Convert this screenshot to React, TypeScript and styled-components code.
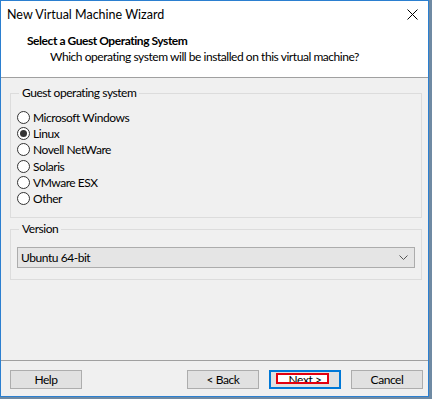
import { useState } from 'react';
import styled, { createGlobalStyle } from 'styled-components';

const GlobalStyle = createGlobalStyle`
  html, body {
    margin: 0;
    padding: 0;
    background: #6f8aa3;
  }
  body {
    font-family: Lato, "Noto Sans", sans-serif;
    font-size: 12px;
    letter-spacing: -0.45px;
    color: #000;
  }
`;

const Window = styled.div`
  box-sizing: border-box;
  width: 429px;
  height: 397px;
  border: 1px solid #2b7fd0;
  background: #f0f0f0;
  display: flex;
  flex-direction: column;
`;

const TitleBar = styled.div`
  height: 26px;
  display: flex;
  align-items: center;
  justify-content: space-between;
  padding: 0 9px 0 6px;
  background: #fff;
  font-size: 12.5px;
  letter-spacing: 0;
`;

const CloseButton = styled.button`
  width: 14px;
  height: 14px;
  padding: 0;
  border: none;
  background: none;
  display: flex;
  align-items: center;
  justify-content: center;
`;

const Header = styled.div`
  background: #fff;
  border-bottom: 1px solid #a0a0a0;
  padding: 6px 0 0 26px;
  box-sizing: border-box;
  height: 51px;
`;

const HeaderTitle = styled.div`
  font-weight: 700;
  line-height: 16px;
`;

const HeaderSubtitle = styled.div`
  padding-left: 23px;
  line-height: 16px;
`;

const Body = styled.div`
  flex: 1;
  padding: 7px 6px 0 9px;
  display: flex;
  flex-direction: column;
  gap: 3px;
`;

const Group = styled.fieldset<{ $height: number }>`
  margin: 0;
  min-inline-size: 0;
  height: ${(p) => p.$height}px;
  box-sizing: border-box;
  border: 1px solid #dcdcdc;
  padding: 8px 6px 0 6px;
`;

const Legend = styled.legend`
  padding: 0 3px;
  margin-left: 2px;
  line-height: 16px;
`;

const RadioList = styled.div`
  display: flex;
  flex-direction: column;
`;

const RadioRow = styled.label`
  height: 16.3px;
  display: flex;
  align-items: center;
  gap: 3px;
  cursor: default;
`;

const RadioCircle = styled.span<{ $checked: boolean }>`
  box-sizing: border-box;
  width: 13px;
  height: 13px;
  border: 1px solid #333;
  border-radius: 50%;
  background: #fff;
  display: flex;
  align-items: center;
  justify-content: center;

  &::after {
    content: '';
    width: 7px;
    height: 7px;
    border-radius: 50%;
    background: ${(p) => (p.$checked ? '#333' : 'transparent')};
  }
`;

const Select = styled.div`
  box-sizing: border-box;
  height: 21px;
  margin-top: 2px;
  border: 1px solid #acacac;
  background: #e5e5e5;
  display: flex;
  align-items: center;
  justify-content: space-between;
  padding: 0 6px 0 3px;
`;

const Footer = styled.div`
  border-top: 1px solid #a0a0a0;
  height: 36px;
  box-sizing: border-box;
  padding: 9px 5px 0 9px;
  display: flex;
  align-items: flex-start;
`;

const Spacer = styled.div`
  flex: 1;
`;

const NavButtons = styled.div`
  display: flex;
  gap: 10px;
`;

const Button = styled.button<{ $default?: boolean }>`
  position: relative;
  box-sizing: border-box;
  width: 72px;
  height: 19px;
  padding: 0;
  font-family: inherit;
  font-size: 12px;
  letter-spacing: inherit;
  line-height: 15px;
  color: #000;
  background: #e1e1e1;
  border: ${(p) => (p.$default ? '2px solid #0078d7' : '1px solid #adadad')};
`;

const Label = styled.span`
  position: relative;
  z-index: 1;
`;

const HighlightFill = styled.span`
  position: absolute;
  left: 5px;
  top: 1px;
  width: 53px;
  height: 11px;
  background: #fff;
`;

const HighlightFrame = styled.span`
  position: absolute;
  z-index: 2;
  left: 5px;
  top: 1px;
  width: 53px;
  height: 11px;
  box-sizing: border-box;
  border: 2px solid #e3000f;
`;

const options = [
  'Microsoft Windows',
  'Linux',
  'Novell NetWare',
  'Solaris',
  'VMware ESX',
  'Other',
];

export default function App() {
  const [os, setOs] = useState('Linux');

  return (
    <>
      <GlobalStyle />
      <Window>
        <TitleBar>
          <span>New Virtual Machine Wizard</span>
          <CloseButton aria-label="Close">
            <svg width="11" height="11" viewBox="0 0 11 11">
              <path d="M0.5 0.5 L10.5 10.5 M10.5 0.5 L0.5 10.5" stroke="#000" strokeWidth="1" />
            </svg>
          </CloseButton>
        </TitleBar>
        <Header>
          <HeaderTitle>Select a Guest Operating System</HeaderTitle>
          <HeaderSubtitle>Which operating system will be installed on this virtual machine?</HeaderSubtitle>
        </Header>
        <Body>
          <Group $height={133}>
            <Legend>Guest operating system</Legend>
            <RadioList>
              {options.map((o) => (
                <RadioRow key={o} onClick={() => setOs(o)}>
                  <RadioCircle $checked={os === o} />
                  {o}
                </RadioRow>
              ))}
            </RadioList>
          </Group>
          <Group $height={59}>
            <Legend>Version</Legend>
            <Select>
              <span>Ubuntu 64-bit</span>
              <svg width="9" height="5" viewBox="0 0 9 5">
                <path d="M0.5 0.5 L4.5 4.5 L8.5 0.5" fill="none" stroke="#555" strokeWidth="1" />
              </svg>
            </Select>
          </Group>
        </Body>
        <Footer>
          <Button>Help</Button>
          <Spacer />
          <NavButtons>
            <Button>&lt; Back</Button>
            <Button $default>
              <HighlightFill />
              <Label>Next &gt;</Label>
              <HighlightFrame />
            </Button>
            <Button>Cancel</Button>
          </NavButtons>
        </Footer>
      </Window>
    </>
  );
}
